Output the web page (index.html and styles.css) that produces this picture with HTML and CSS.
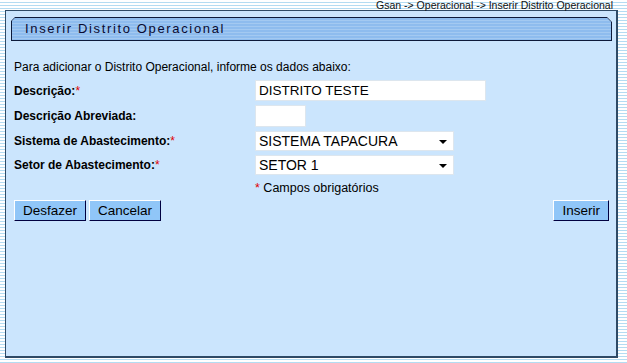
FILE: index.html
```html
<!DOCTYPE html>
<html>
<head>
    <title>Inserir Distrito Operacional</title>
    <link rel="stylesheet" href="styles.css">
</head>
<body>
    <div class="caminho">Gsan -&gt; Operacional -&gt; Inserir Distrito Operacional</div>
    <div class="painel">
        <div class="titulo">
            <div class="titulo-interno">Inserir Distrito Operacional</div>
        </div>
        <div class="conteudo">
            <p class="instrucao">Para adicionar o Distrito Operacional, informe os dados abaixo:</p>
            <div class="formulario">
                <label class="rotulo">Descrição:<span class="obrigatorio">*</span></label>
                <div><input type="text" class="campo campo-longo" value="DISTRITO TESTE"></div>

                <label class="rotulo">Descrição Abreviada:</label>
                <div><input type="text" class="campo campo-curto" value=""></div>

                <label class="rotulo">Sistema de Abastecimento:<span class="obrigatorio">*</span></label>
                <div>
                    <span class="seletor">
                        <select class="campo-select">
                            <option>SISTEMA TAPACURA</option>
                        </select>
                    </span>
                </div>

                <label class="rotulo">Setor de Abastecimento:<span class="obrigatorio">*</span></label>
                <div>
                    <span class="seletor">
                        <select class="campo-select">
                            <option>SETOR 1</option>
                        </select>
                    </span>
                </div>

                <div></div>
                <div class="legenda"><span class="obrigatorio">*</span> Campos obrigatórios</div>
            </div>
            <div class="botoes">
                <div class="botoes-esquerda">
                    <button class="botao">Desfazer</button>
                    <button class="botao">Cancelar</button>
                </div>
                <button class="botao">Inserir</button>
            </div>
        </div>
    </div>
</body>
</html>
```

FILE: styles.css
```css
body {
    margin: 0;
    font-family: "Liberation Sans", Arial, sans-serif;
    font-size: 12px;
    color: #000;
    background-color: #ffffff;
    background-image: repeating-linear-gradient(to bottom, #ffffff 0px, #ffffff 2px, #b4dcf2 2px, #b4dcf2 3px);
    height: 363px;
    overflow: hidden;
}
.caminho {
    height: 10px;
    line-height: 10px;
    font-size: 10.5px;
    text-align: right;
    padding-right: 14px;
    color: #111;
}
.painel {
    margin-left: 5px;
    width: 610px;
    height: 345px;
    background-color: #cbe5fd;
    border-top: 1px solid #2e4a66;
    border-left: 1px solid #2e4a66;
    border-right: 2px solid #2e4a66;
    border-bottom: 2px solid #2e4a66;
}
.titulo {
    margin: 6px 4px 0 5px;
    height: 24px;
    background-color: #0d1a3a;
    clip-path: polygon(4px 0, calc(100% - 5px) 0, 100% 5px, 100% 100%, 0 100%, 0 4px);
    padding: 1px;
    box-sizing: border-box;
}
.titulo-interno {
    height: 100%;
    background-color: #8ebcee;
    background-image: repeating-linear-gradient(to bottom, #8ebcee 0px, #8ebcee 2px, #a3c9f1 2px, #a3c9f1 3px);
    clip-path: polygon(3px 0, calc(100% - 4px) 0, 100% 4px, 100% 100%, 0 100%, 0 3px);
    padding-left: 13px;
    line-height: 22px;
    font-size: 13px;
    letter-spacing: 1.65px;
    color: #0a0a30;
}
.conteudo {
    padding: 19px 6px 0 8px;
}
.instrucao {
    margin: 0 0 5px 0;
    line-height: 15px;
}
.formulario {
    display: grid;
    grid-template-columns: 241px 1fr;
    row-gap: 4px;
    align-items: center;
}
.rotulo {
    font-weight: bold;
}
.obrigatorio {
    color: #e00000;
    font-weight: normal;
}
.campo {
    display: block;
    font-family: "Liberation Sans", Arial, sans-serif;
    font-size: 13.5px;
    height: 21px;
    box-sizing: border-box;
    border: 1px solid #dde6ee;
    background: #fff;
    padding: 1px 3px;
    margin: 0;
    color: #000;
}
.campo-longo {
    width: 231px;
}
.campo-curto {
    width: 51px;
    height: 22px;
}
.seletor {
    position: relative;
    display: block;
    width: 199px;
}
.seletor::after {
    content: "";
    position: absolute;
    right: 7px;
    top: 9px;
    border-left: 4px solid transparent;
    border-right: 4px solid transparent;
    border-top: 4px solid #000;
    pointer-events: none;
}
.campo-select {
    display: block;
    appearance: none;
    -webkit-appearance: none;
    width: 199px;
    height: 20px;
    box-sizing: border-box;
    border: 1px solid #dde6ee;
    background: #fff;
    font-family: "Liberation Sans", Arial, sans-serif;
    font-size: 14px;
    padding: 0 3px;
    margin: 0;
    color: #000;
    border-radius: 0;
}
.legenda {
    line-height: 18px;
    font-size: 12.5px;
}
.botoes {
    display: flex;
    justify-content: space-between;
    margin-top: 3px;
    padding-right: 1px;
}
.botoes-esquerda {
    display: flex;
    gap: 3px;
}
.botao {
    font-family: "Liberation Sans", Arial, sans-serif;
    font-size: 13.5px;
    height: 21px;
    padding: 0 8px;
    background-color: #90c6f8;
    border-top: 1px solid #ffffff;
    border-left: 1px solid #ffffff;
    border-right: 1px solid #000040;
    border-bottom: 1px solid #000040;
    color: #000;
    cursor: pointer;
}
.botao:hover {
    background-color: #a6d2fa;
}
```
